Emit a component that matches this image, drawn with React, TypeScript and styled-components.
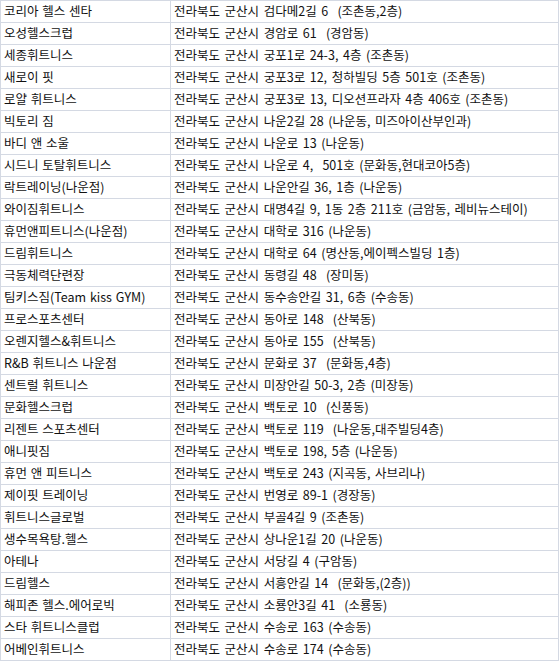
import React from 'react';
import styled, { createGlobalStyle } from 'styled-components';

const GlobalStyle = createGlobalStyle`
  html, body {
    margin: 0;
    padding: 0;
    background: #ffffff;
  }
  body {
    font-family: "Noto Sans CJK KR", "Noto Sans", sans-serif;
  }
`;

const Sheet = styled.div`
  display: grid;
  grid-template-columns: 170px 388px;
  width: 559px;
  border-top: 1px solid #d4d9e3;
  border-left: 1px solid #d4d9e3;
  box-sizing: border-box;
`;

const Cell = styled.div<{ $wide?: boolean }>`
  height: 22px;
  box-sizing: border-box;
  border-right: 1px solid #d4d9e3;
  border-bottom: 1px solid #d4d9e3;
  padding: 0 0 0 3px;
  display: flex;
  align-items: center;
  font-size: 12.5px;
  line-height: 1;
  color: #111;
  white-space: pre;
  overflow: hidden;
  word-spacing: ${props => (props.$wide ? '1.8px' : '1px')};
`;

const gyms: [string, string][] = [
  ['코리아 헬스 센타', '전라북도 군산시 검다메2길 6  (조촌동,2층)'],
  ['오성헬스크럽', '전라북도 군산시 경암로 61  (경암동)'],
  ['세종휘트니스', '전라북도 군산시 궁포1로 24-3, 4층 (조촌동)'],
  ['새로이 핏', '전라북도 군산시 궁포3로 12, 청하빌딩 5층 501호 (조촌동)'],
  ['로얄 휘트니스', '전라북도 군산시 궁포3로 13, 디오션프라자 4층 406호 (조촌동)'],
  ['빅토리 짐', '전라북도 군산시 나운2길 28 (나운동, 미즈아이산부인과)'],
  ['바디 앤 소울', '전라북도 군산시 나운로 13 (나운동)'],
  ['시드니 토탈휘트니스', '전라북도 군산시 나운로 4,  501호 (문화동,현대코아5층)'],
  ['락트레이닝(나운점)', '전라북도 군산시 나운안길 36, 1층 (나운동)'],
  ['와이짐휘트니스', '전라북도 군산시 대명4길 9, 1동 2층 211호 (금암동, 레비뉴스테이)'],
  ['휴먼앤피트니스(나운점)', '전라북도 군산시 대학로 316 (나운동)'],
  ['드림휘트니스', '전라북도 군산시 대학로 64 (명산동,에이펙스빌딩 1층)'],
  ['극동체력단련장', '전라북도 군산시 동령길 48  (장미동)'],
  ['팀키스짐(Team kiss GYM)', '전라북도 군산시 동수송안길 31, 6층 (수송동)'],
  ['프로스포츠센터', '전라북도 군산시 동아로 148  (산북동)'],
  ['오렌지헬스&휘트니스', '전라북도 군산시 동아로 155  (산북동)'],
  ['R&B 휘트니스 나운점', '전라북도 군산시 문화로 37  (문화동,4층)'],
  ['센트럴 휘트니스', '전라북도 군산시 미장안길 50-3, 2층 (미장동)'],
  ['문화헬스크럽', '전라북도 군산시 백토로 10  (신풍동)'],
  ['리젠트 스포츠센터', '전라북도 군산시 백토로 119  (나운동,대주빌딩4층)'],
  ['애니핏짐', '전라북도 군산시 백토로 198, 5층 (나운동)'],
  ['휴먼 앤 피트니스', '전라북도 군산시 백토로 243 (지곡동, 사브리나)'],
  ['제이핏 트레이닝', '전라북도 군산시 번영로 89-1 (경장동)'],
  ['휘트니스글로벌', '전라북도 군산시 부골4길 9 (조촌동)'],
  ['생수목욕탕.헬스', '전라북도 군산시 상나운1길 20 (나운동)'],
  ['아테나', '전라북도 군산시 서당길 4 (구암동)'],
  ['드림헬스', '전라북도 군산시 서흥안길 14  (문화동,(2층))'],
  ['해피존 헬스.에어로빅', '전라북도 군산시 소룡안3길 41  (소룡동)'],
  ['스타 휘트니스클럽', '전라북도 군산시 수송로 163 (수송동)'],
  ['어베인휘트니스', '전라북도 군산시 수송로 174 (수송동)'],
];

export default function App() {
  return (
    <>
      <GlobalStyle />
      <Sheet>
        {gyms.map(([name, address]) => (
          <React.Fragment key={name}>
            <Cell>{name}</Cell>
            <Cell $wide>{address}</Cell>
          </React.Fragment>
        ))}
      </Sheet>
    </>
  );
}
